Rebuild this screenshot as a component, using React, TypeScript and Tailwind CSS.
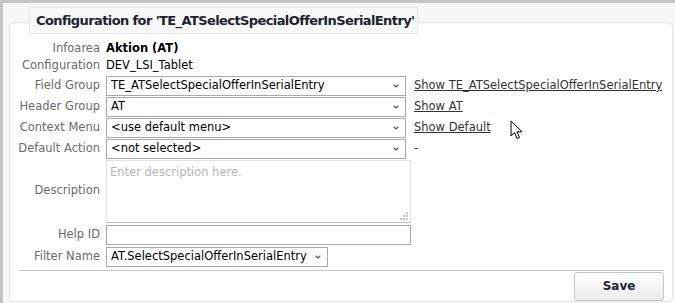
import { ChevronDown } from 'lucide-react';

const font = { fontFamily: '"DejaVu Sans", Verdana, sans-serif' };

function Label({ children }: { children: React.ReactNode }) {
  return <div className="whitespace-nowrap pr-[6px] text-right text-[#6b6b6b]">{children}</div>;
}

function SelectBox({ value, width }: { value: string; width: string }) {
  return (
    <div
      className={`flex h-[20px] items-center justify-between border border-[#a9a9a9] bg-white pl-[4px] pr-[5px] text-black ${width}`}
    >
      <span className="truncate">{value}</span>
      <ChevronDown className="h-[8px] w-[8px] shrink-0 text-[#555]" strokeWidth={3.5} />
    </div>
  );
}

function Cursor() {
  return (
    <svg className="absolute left-[507px] top-[117px]" width="14" height="21" viewBox="0 0 14 21">
      <path
        d="M1 1 L1 16 L4.5 12.5 L7 18.5 L9.5 17.5 L7 11.8 L12 11.8 Z"
        fill="#fff"
        stroke="#000"
        strokeWidth="1"
        strokeLinejoin="round"
      />
    </svg>
  );
}

export default function App() {
  return (
    <div
      className="relative h-[303px] w-[675px] overflow-hidden border-l-[3px] border-t-[3px] border-[#c4c4c4] bg-[#f7f7f7] pl-[6px] pr-[2px] pt-[4px] text-[11.5px]"
      style={font}
    >
      {/* legend */}
      <div className="relative z-10 -mb-[12px] ml-[20px] flex h-[27px] w-[389px] items-center whitespace-nowrap border border-[#e6e6e6] bg-[#f8f8f8] pl-[6px] text-[13px] font-bold tracking-[-0.6px] text-[#1b2230]">
        Configuration for 'TE_ATSelectSpecialOfferInSerialEntry'
      </div>

      <div className="flex h-[280px] flex-col rounded-[5px] border border-[#e4e4e4] bg-white pt-[17px]">
        <div className="grid grid-cols-[96px_1fr] items-center">
          <div className="flex h-[17px] items-center justify-end"><Label>Infoarea</Label></div>
          <div className="font-bold text-black">Aktion (AT)</div>
          <div className="flex h-[17px] items-center justify-end"><Label>Configuration</Label></div>
          <div className="text-black">DEV_LSI_Tablet</div>

          <div className="mt-[1px] flex justify-end"><Label>Field Group</Label></div>
          <div className="mt-[1px] flex items-center gap-[8px]">
            <SelectBox value="TE_ATSelectSpecialOfferInSerialEntry" width="w-[300px]" />
            <a className="whitespace-nowrap text-[#333] underline">Show TE_ATSelectSpecialOfferInSerialEntry</a>
          </div>

          <div className="mt-[1px] flex justify-end"><Label>Header Group</Label></div>
          <div className="mt-[1px] flex items-center gap-[8px]">
            <SelectBox value="AT" width="w-[300px]" />
            <a className="text-[#333] underline">Show AT</a>
          </div>

          <div className="mt-[1px] flex justify-end"><Label>Context Menu</Label></div>
          <div className="mt-[1px] flex items-center gap-[8px]">
            <SelectBox value="<use default menu>" width="w-[300px]" />
            <a className="text-[#333] underline">Show Default</a>
          </div>

          <div className="mt-[1px] flex justify-end"><Label>Default Action</Label></div>
          <div className="mt-[1px] flex items-center gap-[8px]">
            <SelectBox value="<not selected>" width="w-[300px]" />
            <span className="text-[#333]">-</span>
          </div>

          <div className="mt-[1px] flex justify-end"><Label>Description</Label></div>
          <div className="relative mt-[1px] h-[63px] w-[305px] border border-[#e2e2e2] border-b-[#bdbdbd] bg-white pl-[3px] pt-[3px] text-[#b5b5b5]">
            Enter description here.
            <svg className="absolute bottom-[2px] right-[2px]" width="8" height="8" viewBox="0 0 8 8">
              <rect x="6" y="0" width="2" height="2" fill="#c8c8c8" />
              <rect x="3" y="3" width="2" height="2" fill="#c8c8c8" />
              <rect x="6" y="3" width="2" height="2" fill="#c8c8c8" />
              <rect x="0" y="6" width="2" height="2" fill="#c8c8c8" />
              <rect x="3" y="6" width="2" height="2" fill="#c8c8c8" />
              <rect x="6" y="6" width="2" height="2" fill="#c8c8c8" />
            </svg>
          </div>

          <div className="mt-[2px] flex justify-end"><Label>Help ID</Label></div>
          <div className="mt-[2px] h-[20px] w-[305px] border border-[#a9a9a9] bg-white" />

          <div className="mt-[2px] flex justify-end"><Label>Filter Name</Label></div>
          <div className="mt-[2px]">
            <SelectBox value="AT.SelectSpecialOfferInSerialEntry" width="w-[222px]" />
          </div>
        </div>

        <div className="ml-[9px] mr-[8px] mt-[3px] h-[1px] bg-[#c8c8c8]" />

        <div className="mr-[8px] mt-[1px] flex justify-end">
          <button className="h-[29px] w-[90px] rounded-[3px] border border-[#c6c6c6] bg-gradient-to-b from-white to-[#ececec] text-[12px] font-bold text-[#1e2430]">
            Save
          </button>
        </div>
      </div>

      <Cursor />
    </div>
  );
}
